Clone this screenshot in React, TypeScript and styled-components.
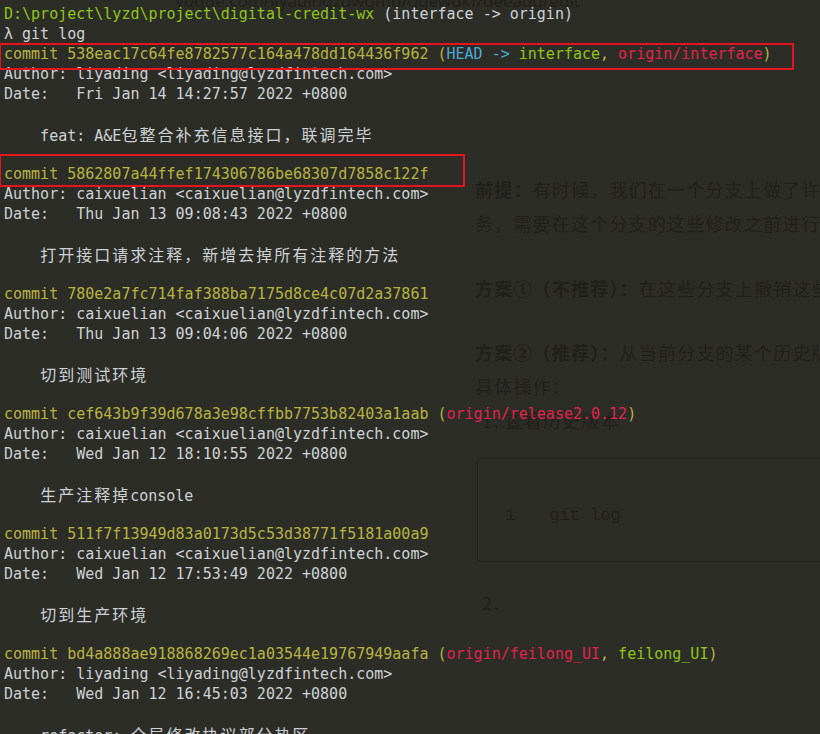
import React from 'react';
import styled, { createGlobalStyle } from 'styled-components';

const Global = createGlobalStyle`
  html, body { margin: 0; padding: 0; background: #2d2d27; }
  body { overflow: hidden; }
`;

const Screen = styled.div`
  display: grid;
  width: 820px;
  height: 734px;
  overflow: hidden;
  background: #2d2d27;
  & > * { grid-area: 1 / 1; }
`;

/* ---------- faint page showing through the translucent terminal ---------- */
const Ghost = styled.div`
  display: flex;
  flex-direction: column;
  min-width: 0;
  color: #21211c;
  font-family: "Noto Sans CJK SC", "Noto Sans", sans-serif;
`;

const UrlBar = styled.div`
  margin-top: -8px;
  height: 18px;
  padding-left: 175px;
  font: 17px/18px "Noto Sans", sans-serif;
  white-space: nowrap;
`;

const Doc = styled.div`
  display: flex;
  flex-direction: column;
  padding: 162px 0 0 475px;
`;

const GhostLine = styled.div<{ $top?: number; $indent?: number }>`
  margin-top: ${(p) => p.$top ?? 0}px;
  padding-left: ${(p) => p.$indent ?? 0}px;
  height: 34px;
  font-size: 18px;
  line-height: 34px;
  letter-spacing: 1.2px;
  white-space: nowrap;
`;

const Strong = styled.b`
  font-weight: 700;
`;

const CodeBlock = styled.div`
  margin: 21px 0 0 2px;
  height: 104px;
  border: 1px solid #262621;
  border-right: none;
  border-radius: 4px 0 0 4px;
  display: flex;
  align-items: center;
  gap: 34px;
  padding: 10px 0 0 27px;
  box-sizing: border-box;
  font: 17px "Liberation Mono", monospace;
`;

/* ---------- terminal ---------- */
const Terminal = styled.div`
  position: relative;
  display: flex;
  flex-direction: column;
  padding: 4px 0 0 4px;
  font-family: "DejaVu Sans Mono", "Liberation Mono", monospace;
  font-size: 15px;
  color: #cdd2d6;
`;

const Line = styled.div`
  height: 20px;
  line-height: 20px;
  white-space: pre;
`;

const toneColor: Record<string, string> = {
  plain: '#cdd2d6',
  path: '#8dc41e',
  hash: '#b8b340',
  head: '#4aa9d6',
  local: '#8fc51c',
  remote: '#e2224c',
};

const Tone = styled.span<{ $tone: string }>`
  color: ${(p) => toneColor[p.$tone]};
`;

const Han = styled.span`
  font-family: "Noto Sans CJK SC", sans-serif;
  font-size: 16px;
  letter-spacing: 2px;
`;

const Mark = styled.div<{ $x: number; $y: number; $w: number; $h: number }>`
  position: absolute;
  left: ${(p) => p.$x}px;
  top: ${(p) => p.$y}px;
  width: ${(p) => p.$w}px;
  height: ${(p) => p.$h}px;
  border: 2px solid #e6141e;
  box-sizing: border-box;
`;

type Seg = [string, string];

const commit = (hash: string, refs: Seg[] = [], sep = ', '): Seg[] => {
  const out: Seg[] = [['hash', `commit ${hash}`]];
  if (refs.length) {
    out.push(['hash', ' (']);
    refs.forEach((r, i) => {
      if (i && refs[i - 1][0] !== 'head') out.push(['hash', sep]);
      out.push(r);
    });
    out.push(['hash', ')']);
  }
  return out;
};
const author = (n: string): Seg[] => [['plain', `Author: ${n} <${n}@lyzdfintech.com>`]];
const date = (d: string): Seg[] => [['plain', `Date:   ${d} 2022 +0800`]];
const msg = (m: string): Seg[] => [['plain', `    ${m}`]];
const blank: Seg[] = [['plain', '']];

const lines: Seg[][] = [
  [['path', 'D:\\project\\lyzd\\project\\digital-credit-wx'], ['plain', ' (interface -> origin)']],
  [['plain', 'λ git log']],
  commit('538eac17c64fe8782577c164a478dd164436f962', [
    ['head', 'HEAD -> '],
    ['local', 'interface'],
    ['remote', 'origin/interface'],
  ]),
  author('liyading'),
  date('Fri Jan 14 14:27:57'),
  blank,
  msg('feat: A&E包整合补充信息接口，联调完毕'),
  blank,
  commit('5862807a44ffef174306786be68307d7858c122f'),
  author('caixuelian'),
  date('Thu Jan 13 09:08:43'),
  blank,
  msg('打开接口请求注释，新增去掉所有注释的方法'),
  blank,
  commit('780e2a7fc714faf388ba7175d8ce4c07d2a37861'),
  author('caixuelian'),
  date('Thu Jan 13 09:04:06'),
  blank,
  msg('切到测试环境'),
  blank,
  commit('cef643b9f39d678a3e98cffbb7753b82403a1aab', [['remote', 'origin/release2.0.12']]),
  author('caixuelian'),
  date('Wed Jan 12 18:10:55'),
  blank,
  msg('生产注释掉console'),
  blank,
  commit('511f7f13949d83a0173d5c53d38771f5181a00a9'),
  author('caixuelian'),
  date('Wed Jan 12 17:53:49'),
  blank,
  msg('切到生产环境'),
  blank,
  commit('bd4a888ae918868269ec1a03544e19767949aafa', [
    ['remote', 'origin/feilong_UI'],
    ['local', 'feilong_UI'],
  ]),
  author('liyading'),
  date('Wed Jan 12 16:45:03'),
  blank,
  msg('refactor: 全局修改协议部分热区'),
];

const cjk = /([\u3000-\u9fff\uff00-\uffef]+)/;

const renderText = (text: string) =>
  text.split(cjk).map((part, i) =>
    i % 2 === 1 ? <Han key={i}>{part}</Han> : <React.Fragment key={i}>{part}</React.Fragment>
  );

export default function App() {
  return (
    <>
      <Global />
      <Screen>
        <Ghost>
          <UrlBar>yuque.com/liyadingzdwgmu/ggewdkf/deeadg/edit</UrlBar>
          <Doc>
            <GhostLine>
              <Strong>前提：</Strong>有时候，我们在一个分支上做了许多修改
            </GhostLine>
            <GhostLine>务，需要在这个分支的这些修改之前进行开发</GhostLine>
            <GhostLine $top={31}>
              <Strong>方案①（不推荐）：</Strong>在这些分支上撤销这些修改
            </GhostLine>
            <GhostLine $top={30}>
              <Strong>方案②（推荐）：</Strong>从当前分支的某个历史版本
            </GhostLine>
            <GhostLine>具体操作：</GhostLine>
            <GhostLine $indent={7}>1. 查看历史版本</GhostLine>
            <CodeBlock>
              <span>1</span>
              <span>git log</span>
            </CodeBlock>
            <GhostLine $top={23} $indent={7}>2.</GhostLine>
          </Doc>
        </Ghost>
        <Terminal>
          {lines.map((segs, i) => (
            <Line key={i}>
              {segs.map(([tone, text], j) => (
                <Tone key={j} $tone={tone}>
                  {renderText(text)}
                </Tone>
              ))}
            </Line>
          ))}
          <Mark $x={-1} $y={43} $w={795} $h={27} />
          <Mark $x={-1} $y={154} $w={466} $h={33} />
        </Terminal>
      </Screen>
    </>
  );
}
